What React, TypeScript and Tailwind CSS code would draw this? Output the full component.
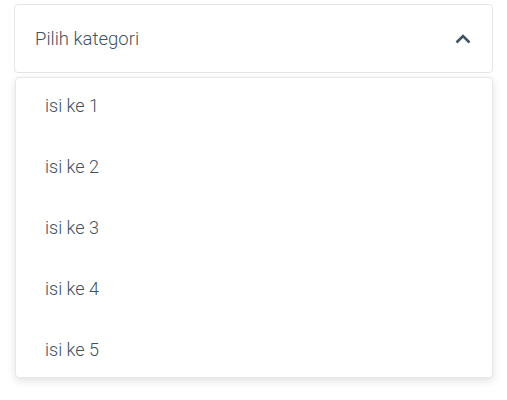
import React from "react";

export default function App() {
  const items = ["isi ke 1", "isi ke 2", "isi ke 3", "isi ke 4", "isi ke 5"];
  return (
    <div className="w-[507px] h-[400px] bg-white" style={{ fontFamily: "Roboto, sans-serif" }}>
      <div className="pl-[14px] pr-[14px] pt-[4px]">
        <div className="h-[69px] border border-[#e3e6e8] rounded-[4px] flex items-center justify-between pl-[20px] pr-[21px] bg-white">
          <span className="text-[18.5px] font-light text-[#3f525e] leading-[20px]">Pilih kategori</span>
          <svg width="16" height="10" viewBox="0 0 16 10" fill="none">
            <path d="M1.5 8.5 L8 2 L14.5 8.5" stroke="#3e5462" strokeWidth="2.6" />
          </svg>
        </div>
        <div className="mt-[4px] ml-[1px] rounded-[4px] border border-[#e6e8ea] bg-white shadow-[0_3px_8px_rgba(0,0,0,0.12)] pt-[18px] pb-[17px] pl-[29px] flex flex-col gap-[41px]">
          {items.map((t) => (
            <div key={t} className="text-[18px] font-light text-[#3f525e] leading-[20px]">
              {t}
            </div>
          ))}
        </div>
      </div>
    </div>
  );
}
